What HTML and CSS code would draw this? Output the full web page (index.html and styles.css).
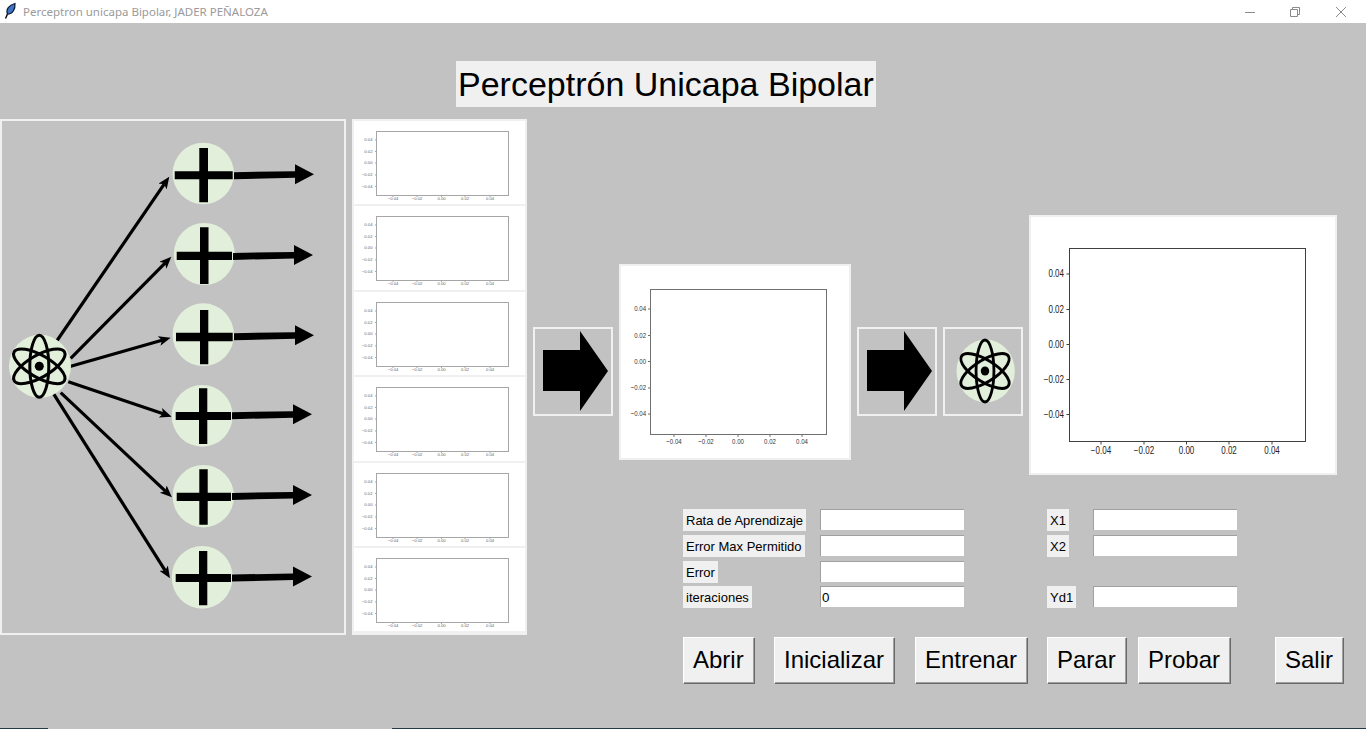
FILE: index.html
```html
<!DOCTYPE html>
<html lang="es">
<head>
    <meta charset="UTF-8">
    <meta name="viewport" content="width=device-width, initial-scale=1.0">
    <title>Perceptron unicapa Bipolar</title>
    <link rel="stylesheet" href="styles.css">
</head>
<body>
    <header class="titlebar">
        <svg class="feather" viewBox="0 0 20 23">
            <path d="M5.5 18.5 L7.5 14" stroke="#000" stroke-width="1.4" fill="none"/>
            <path d="M7.5 14 C5.5 9.5 9 5 15 3.5 C15.5 9 12.5 14.5 7.5 14 Z" fill="#3f74c4" stroke="#0b1a33" stroke-width="1.2"/>
        </svg>
        <span class="window-title">Perceptron unicapa Bipolar, JADER PEÑALOZA</span>
        <div class="window-controls">
            <svg viewBox="0 0 10 10"><path d="M0 5.5H10"/></svg>
            <svg viewBox="0 0 10 10"><path d="M.5 2.5H7.5V9.5H.5Z M2.5 2.5V.5H9.5V7.5H7.5"/></svg>
            <svg viewBox="0 0 10 10"><path d="M0 0L10 10M10 0L0 10"/></svg>
        </div>
    </header>

    <main class="app">
        <h1 class="heading">Perceptrón Unicapa Bipolar</h1>

        <div class="stage">
            <!-- red: coordenadas iguales a las de la ventana -->
            <div class="network">
                <svg viewBox="2 121 342 512">
                    <defs>
                        <marker id="tip" markerUnits="userSpaceOnUse" markerWidth="13" markerHeight="11" refX="3" refY="5" orient="auto">
                            <path d="M0 0L12 5L0 10L3 5Z"/>
                        </marker>
                        <g id="atom">
                            <ellipse class="atom-disc" cx=".7" rx="31" ry="31.5"/>
                            <ellipse class="atom-orbit" rx="9.5" ry="31"/>
                            <ellipse class="atom-orbit" rx="11" ry="29" transform="rotate(60)"/>
                            <ellipse class="atom-orbit" rx="11" ry="29" transform="rotate(-60)"/>
                            <circle r="4.5"/>
                        </g>
                        <path id="out" d="M0-3.5L61-4.5V-11.4L80-1.4L61 8.6V2L0 3.5Z"/>
                    </defs>

                    <line class="link" x1="54" y1="345" x2="164.2" y2="184.1"/>
                    <line class="link" x1="70.7" y1="358.3" x2="165" y2="263.1"/>
                    <line class="link" x1="67.3" y1="367.3" x2="162" y2="340.2"/>
                    <line class="link" x1="68.3" y1="381.7" x2="163.2" y2="413.8"/>
                    <line class="link" x1="60.7" y1="392.7" x2="165.4" y2="491.1"/>
                    <line class="link" x1="53.3" y1="393.3" x2="165.2" y2="570.7"/>

                    <use href="#atom" transform="translate(39.3 366.3)"/>

                    <ellipse class="node" cx="203.3" cy="173.5" rx="30.7" ry="30.8"/>
                    <path d="M174.7 171.3H232.7V179.3H174.7Z M199.3 148H208V202.3H199.3Z"/>
                    <use href="#out" x="234" y="175.7"/>

                    <ellipse class="node" cx="204.3" cy="254" rx="30.5" ry="31"/>
                    <path d="M176.7 251.7H232V260H176.7Z M200 227.3H208.5V284H200Z"/>
                    <use href="#out" x="233" y="256.4"/>

                    <ellipse class="node" cx="203.3" cy="334.7" rx="30.7" ry="31.4"/>
                    <path d="M176 332.7H232.7V341.3H176Z M200 310H208.3V364.3H200Z"/>
                    <use href="#out" x="234" y="336.7"/>

                    <ellipse class="node" cx="202.2" cy="415.8" rx="30.5" ry="30.9"/>
                    <path d="M175.7 412H231V420H175.7Z M199 388.3H207.3V444H199Z"/>
                    <use href="#out" x="232" y="415.7"/>

                    <ellipse class="node" cx="203.3" cy="496.2" rx="30.7" ry="31.2"/>
                    <path d="M176.7 492.7H231V501H176.7Z M199.3 469.3H207.7V524.7H199.3Z"/>
                    <use href="#out" x="232" y="496.4"/>

                    <ellipse class="node" cx="202.2" cy="577.3" rx="30.5" ry="31.4"/>
                    <path d="M175.7 574H231V582H175.7Z M199 551H207.3V605.3H199Z"/>
                    <use href="#out" x="232" y="578"/>
                </svg>
            </div>

            <div class="plot-stack">
                <div class="plot-small">
                    <svg viewBox="0 0 171 83.4">
                        <rect x="22.5" y="10.5" width="132" height="64"/>
                        <path d="M21 19H22.5M21 30.5H22.5M21 42H22.5M21 54H22.5M21 65.5H22.5M39 74.5V76M63 74.5V76M87.5 74.5V76M111 74.5V76M136 74.5V76"/>
                        <text class="yt" x="18.5" y="20.5">0.04</text><text class="yt" x="18.5" y="32">0.02</text><text class="yt" x="18.5" y="43.5">0.00</text><text class="yt" x="18.5" y="55.5">−0.02</text><text class="yt" x="18.5" y="67">−0.04</text>
                        <text class="xt" x="39" y="79.5">−0.04</text><text class="xt" x="63" y="79.5">−0.02</text><text class="xt" x="87.5" y="79.5">0.00</text><text class="xt" x="111" y="79.5">0.02</text><text class="xt" x="136" y="79.5">0.04</text>
                    </svg>
                </div>
                <div class="plot-small">
                    <svg viewBox="0 0 171 83.4">
                        <rect x="22.5" y="10.5" width="132" height="64"/>
                        <path d="M21 19H22.5M21 30.5H22.5M21 42H22.5M21 54H22.5M21 65.5H22.5M39 74.5V76M63 74.5V76M87.5 74.5V76M111 74.5V76M136 74.5V76"/>
                        <text class="yt" x="18.5" y="20.5">0.04</text><text class="yt" x="18.5" y="32">0.02</text><text class="yt" x="18.5" y="43.5">0.00</text><text class="yt" x="18.5" y="55.5">−0.02</text><text class="yt" x="18.5" y="67">−0.04</text>
                        <text class="xt" x="39" y="79.5">−0.04</text><text class="xt" x="63" y="79.5">−0.02</text><text class="xt" x="87.5" y="79.5">0.00</text><text class="xt" x="111" y="79.5">0.02</text><text class="xt" x="136" y="79.5">0.04</text>
                    </svg>
                </div>
                <div class="plot-small">
                    <svg viewBox="0 0 171 83.4">
                        <rect x="22.5" y="10.5" width="132" height="64"/>
                        <path d="M21 19H22.5M21 30.5H22.5M21 42H22.5M21 54H22.5M21 65.5H22.5M39 74.5V76M63 74.5V76M87.5 74.5V76M111 74.5V76M136 74.5V76"/>
                        <text class="yt" x="18.5" y="20.5">0.04</text><text class="yt" x="18.5" y="32">0.02</text><text class="yt" x="18.5" y="43.5">0.00</text><text class="yt" x="18.5" y="55.5">−0.02</text><text class="yt" x="18.5" y="67">−0.04</text>
                        <text class="xt" x="39" y="79.5">−0.04</text><text class="xt" x="63" y="79.5">−0.02</text><text class="xt" x="87.5" y="79.5">0.00</text><text class="xt" x="111" y="79.5">0.02</text><text class="xt" x="136" y="79.5">0.04</text>
                    </svg>
                </div>
                <div class="plot-small">
                    <svg viewBox="0 0 171 83.4">
                        <rect x="22.5" y="10.5" width="132" height="64"/>
                        <path d="M21 19H22.5M21 30.5H22.5M21 42H22.5M21 54H22.5M21 65.5H22.5M39 74.5V76M63 74.5V76M87.5 74.5V76M111 74.5V76M136 74.5V76"/>
                        <text class="yt" x="18.5" y="20.5">0.04</text><text class="yt" x="18.5" y="32">0.02</text><text class="yt" x="18.5" y="43.5">0.00</text><text class="yt" x="18.5" y="55.5">−0.02</text><text class="yt" x="18.5" y="67">−0.04</text>
                        <text class="xt" x="39" y="79.5">−0.04</text><text class="xt" x="63" y="79.5">−0.02</text><text class="xt" x="87.5" y="79.5">0.00</text><text class="xt" x="111" y="79.5">0.02</text><text class="xt" x="136" y="79.5">0.04</text>
                    </svg>
                </div>
                <div class="plot-small">
                    <svg viewBox="0 0 171 83.4">
                        <rect x="22.5" y="10.5" width="132" height="64"/>
                        <path d="M21 19H22.5M21 30.5H22.5M21 42H22.5M21 54H22.5M21 65.5H22.5M39 74.5V76M63 74.5V76M87.5 74.5V76M111 74.5V76M136 74.5V76"/>
                        <text class="yt" x="18.5" y="20.5">0.04</text><text class="yt" x="18.5" y="32">0.02</text><text class="yt" x="18.5" y="43.5">0.00</text><text class="yt" x="18.5" y="55.5">−0.02</text><text class="yt" x="18.5" y="67">−0.04</text>
                        <text class="xt" x="39" y="79.5">−0.04</text><text class="xt" x="63" y="79.5">−0.02</text><text class="xt" x="87.5" y="79.5">0.00</text><text class="xt" x="111" y="79.5">0.02</text><text class="xt" x="136" y="79.5">0.04</text>
                    </svg>
                </div>
                <div class="plot-small">
                    <svg viewBox="0 0 171 83.4">
                        <rect x="22.5" y="10.5" width="132" height="64"/>
                        <path d="M21 19H22.5M21 30.5H22.5M21 42H22.5M21 54H22.5M21 65.5H22.5M39 74.5V76M63 74.5V76M87.5 74.5V76M111 74.5V76M136 74.5V76"/>
                        <text class="yt" x="18.5" y="20.5">0.04</text><text class="yt" x="18.5" y="32">0.02</text><text class="yt" x="18.5" y="43.5">0.00</text><text class="yt" x="18.5" y="55.5">−0.02</text><text class="yt" x="18.5" y="67">−0.04</text>
                        <text class="xt" x="39" y="79.5">−0.04</text><text class="xt" x="63" y="79.5">−0.02</text><text class="xt" x="87.5" y="79.5">0.00</text><text class="xt" x="111" y="79.5">0.02</text><text class="xt" x="136" y="79.5">0.04</text>
                    </svg>
                </div>
            </div>

            <div class="workspace">
                <div class="pipeline">
                    <div class="tile">
                        <svg viewBox="0 0 76 85"><path d="M8 21H45V2L73 42L45 82V62H8Z"/></svg>
                    </div>
                    <div class="plot-mid">
                        <svg viewBox="0 0 228 192">
                            <rect x="29.5" y="23.5" width="176" height="145"/>
                            <path d="M27 43H29.5M27 69.5H29.5M27 95.5H29.5M27 122H29.5M27 148H29.5M53 168.5V171M85 168.5V171M117 168.5V171M149 168.5V171M181 168.5V171"/>
                            <text class="yt" x="25" y="45.5">0.04</text>
                            <text class="yt" x="25" y="72">0.02</text>
                            <text class="yt" x="25" y="98">0.00</text>
                            <text class="yt" x="25" y="124.5">−0.02</text>
                            <text class="yt" x="25" y="150.5">−0.04</text>
                            <text class="xt" x="53" y="178">−0.04</text>
                            <text class="xt" x="85" y="178">−0.02</text>
                            <text class="xt" x="117" y="178">0.00</text>
                            <text class="xt" x="149" y="178">0.02</text>
                            <text class="xt" x="181" y="178">0.04</text>
                        </svg>
                    </div>
                    <div class="tile">
                        <svg viewBox="0 0 76 85"><path d="M8 21H45V2L73 42L45 82V62H8Z"/></svg>
                    </div>
                    <div class="tile">
                        <svg viewBox="0 0 76 85"><use href="#atom" transform="translate(40 42) scale(.94 1)"/></svg>
                    </div>
                    <div class="plot-big">
                        <svg viewBox="0 0 304 256">
                            <rect x="38.5" y="31.5" width="236" height="193"/>
                            <path d="M35.5 57H38.5M35.5 92.5H38.5M35.5 127.5H38.5M35.5 162.5H38.5M35.5 197.5H38.5M70 224.5V227.5M113 224.5V227.5M155.5 224.5V227.5M198 224.5V227.5M241 224.5V227.5"/>
                            <text class="yt" x="33" y="60.5">0.04</text>
                            <text class="yt" x="33" y="96">0.02</text>
                            <text class="yt" x="33" y="131">0.00</text>
                            <text class="yt" x="33" y="166">−0.02</text>
                            <text class="yt" x="33" y="201">−0.04</text>
                            <text class="xt" x="70" y="237.5">−0.04</text>
                            <text class="xt" x="113" y="237.5">−0.02</text>
                            <text class="xt" x="155.5" y="237.5">0.00</text>
                            <text class="xt" x="198" y="237.5">0.02</text>
                            <text class="xt" x="241" y="237.5">0.04</text>
                        </svg>
                    </div>
                </div>

                <form class="params">
                    <label class="field-label" for="rata">Rata de Aprendizaje</label>
                    <input class="entry" type="text" id="rata">
                    <span></span>
                    <label class="field-label" for="x1">X1</label>
                    <input class="entry" type="text" id="x1">

                    <label class="field-label" for="errorMax">Error Max Permitido</label>
                    <input class="entry" type="text" id="errorMax">
                    <span></span>
                    <label class="field-label" for="x2">X2</label>
                    <input class="entry" type="text" id="x2">

                    <label class="field-label" for="error">Error</label>
                    <input class="entry" type="text" id="error">
                    <span></span>
                    <span></span>
                    <span></span>

                    <label class="field-label" for="iter">iteraciones</label>
                    <input class="entry" type="text" id="iter" value="0">
                    <span></span>
                    <label class="field-label" for="yd1">Yd1</label>
                    <input class="entry" type="text" id="yd1">
                </form>

                <div class="actions">
                    <button class="tk-button" type="button">Abrir</button>
                    <button class="tk-button" type="button">Inicializar</button>
                    <button class="tk-button" type="button">Entrenar</button>
                    <button class="tk-button" type="button">Parar</button>
                    <button class="tk-button" type="button">Probar</button>
                    <button class="tk-button" type="button">Salir</button>
                </div>
            </div>
        </div>
    </main>

    <div class="desktop-edge">
        <div class="edge-dark edge-left"></div>
        <div class="edge-gap"></div>
        <div class="edge-dark edge-right"></div>
    </div>
</body>
</html>
```

FILE: styles.css
```css
html, body {
    margin: 0;
    height: 729px;
    overflow: hidden;
}
body {
    display: flex;
    flex-direction: column;
    background-color: #c2c2c2;
    font-family: "Liberation Sans", Arial, sans-serif;
    color: #000;
}

/* barra de titulo */
.titlebar {
    flex: none;
    display: flex;
    align-items: center;
    height: 23px;
    background-color: #fff;
}
.feather {
    width: 20px;
    height: 23px;
    margin-right: 3px;
}
.window-title {
    font-family: "Noto Sans", sans-serif;
    font-size: 11.5px;
    color: #9a9a9a;
}
.window-controls {
    display: flex;
    gap: 35px;
    margin-left: auto;
    margin-right: 20px;
}
.window-controls svg {
    display: block;
    width: 10px;
    height: 10px;
    fill: none;
    stroke: #8a8a8a;
    stroke-width: 1;
}
.window-controls svg:last-child {
    margin-left: 1px;
}

.app {
    flex: 1;
    padding-top: 38px;
}
.heading {
    width: max-content;
    height: 46px;
    margin: 0 0 12px 456px;
    padding: 0 2px;
    background-color: #f0f0f0;
    font-size: 34px;
    font-weight: normal;
    line-height: 46px;
}

.stage {
    display: flex;
    gap: 6px;
}

/* panel de la red */
.network {
    box-sizing: border-box;
    flex: none;
    width: 346px;
    height: 516px;
    border: 2px solid #f0f0f0;
}
.network svg {
    display: block;
    width: 100%;
    height: 100%;
}
.node {
    fill: #e2efda;
}
.link {
    stroke: #000;
    stroke-width: 3.2;
    marker-end: url(#tip);
}
.atom-disc {
    fill: #e2efda;
}
.atom-orbit {
    fill: none;
    stroke: #000;
    stroke-width: 3;
}

/* graficas */
.plot-stack {
    box-sizing: border-box;
    flex: none;
    display: flex;
    flex-direction: column;
    gap: 2px;
    width: 175px;
    height: 516px;
    border: 2px solid #f0f0f0;
    background-color: #f0f0f0;
}
.plot-small {
    flex: none;
    height: 83.4px;
    background-color: #fff;
}
.plot-small svg,
.plot-mid svg,
.plot-big svg,
.tile svg {
    display: block;
    width: 100%;
    height: 100%;
}
.plot-small rect,
.plot-mid rect,
.plot-big rect {
    fill: #fff;
    stroke-width: 1;
}
.plot-small path,
.plot-mid path,
.plot-big path {
    fill: none;
    stroke-width: 1;
}
.plot-small rect,
.plot-small path {
    stroke: #a6a6a6;
}
.plot-mid rect,
.plot-mid path {
    stroke: #707070;
}
.plot-big rect,
.plot-big path {
    stroke: #404040;
}
.yt,
.xt {
    font-family: "Liberation Sans", Arial, sans-serif;
    transform-box: fill-box;
}
.yt {
    text-anchor: end;
    transform-origin: right center;
}
.xt {
    text-anchor: middle;
    transform-origin: center;
}
.plot-small text {
    font-size: 4.2px;
    fill: #666;
}
.plot-mid text {
    font-size: 8px;
    fill: #333;
    transform: scaleX(.76);
}
.plot-big text {
    font-size: 10px;
    fill: #222;
    transform: scaleX(.8);
}

.workspace {
    flex: none;
    width: 811px;
}
.pipeline {
    display: flex;
    align-items: flex-start;
    gap: 6px;
    height: 356px;
}
.tile {
    box-sizing: border-box;
    flex: none;
    width: 80px;
    height: 89px;
    margin-top: 208px;
    border: 2px solid #f0f0f0;
}
.plot-mid,
.plot-big {
    box-sizing: border-box;
    flex: none;
    border: 2px solid #f0f0f0;
    background-color: #fff;
}
.plot-mid {
    width: 232px;
    height: 196px;
    margin-top: 145px;
}
.plot-big {
    width: 308px;
    height: 260px;
    margin-top: 96px;
}

/* formulario */
.params {
    display: grid;
    grid-template-columns: 137px 144px 83px 46px 144px;
    grid-template-rows: 26px 26px 25px 22px;
    align-items: start;
    justify-items: start;
    margin: 34px 0 0 150px;
}
.field-label {
    height: 22px;
    padding: 0 3px;
    background-color: #f0f0f0;
    font-size: 13px;
    line-height: 24px;
}
.entry {
    box-sizing: border-box;
    width: 144px;
    height: 21px;
    margin: 0;
    padding: 0 0 0 1px;
    border: none;
    border-top: 1px solid #a0a0a0;
    border-left: 1px solid #a0a0a0;
    border-radius: 0;
    outline: none;
    background-color: #fff;
    color: #000;
    font-family: "Liberation Sans", Arial, sans-serif;
    font-size: 13.33px;
}

/* botones */
.actions {
    display: grid;
    grid-template-columns: 91px 141px 132px 91px 137px 69px;
    justify-items: start;
    margin: 29px 0 0 150px;
}
.tk-button {
    box-sizing: border-box;
    height: 46px;
    padding: 0 10px;
    border: none;
    border-radius: 0;
    background-color: #f0f0f0;
    box-shadow: inset 1px 1px 0 #fff, inset -1px -1px 0 #a0a0a0, 1px 1px 0 #696969;
    color: #000;
    font-family: "Liberation Sans", Arial, sans-serif;
    font-size: 24px;
}

.desktop-edge {
    flex: none;
    display: flex;
    height: 1px;
}
.edge-dark {
    background-color: #233a45;
}
.edge-left {
    width: 48px;
}
.edge-gap {
    width: 344px;
}
.edge-right {
    flex: 1;
}
```
